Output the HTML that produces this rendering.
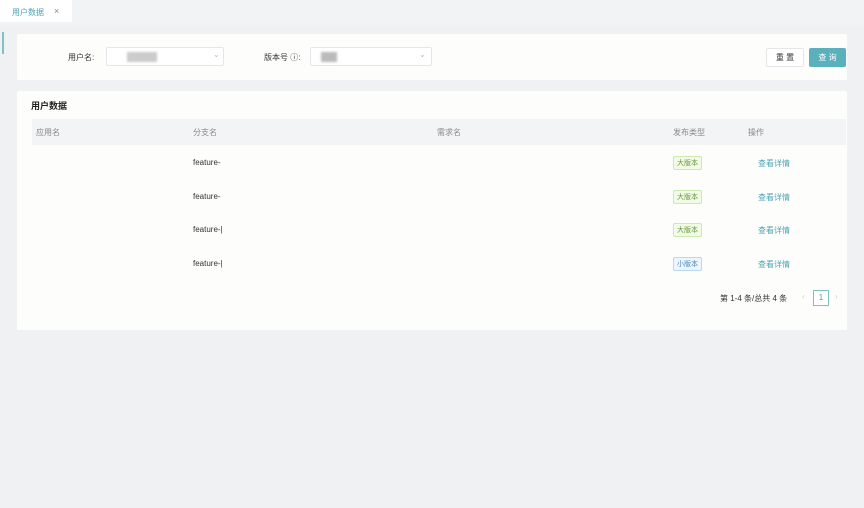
<!DOCTYPE html>
<html><head><meta charset="utf-8"><style>
*{margin:0;padding:0;box-sizing:border-box}
body{width:864px;height:508px;background:#eff1f3;font-family:"Liberation Sans","Noto Sans CJK SC",sans-serif;font-size:8px;color:#333;position:relative;overflow:hidden}
.a{position:absolute}
.card{position:absolute;background:#fdfdfc;border-radius:2px}
.sel{position:absolute;height:19px;border:1px solid #e4e6e8;background:#fff;border-radius:2px}
.tag{position:absolute;font-size:7px;padding:1px 3px;border:1px solid #cde8b0;background:#f2fae8;color:#6a9a3a;border-radius:2px}
.lnk{position:absolute;color:#4aa3b0;font-size:8px}
.ft{position:absolute;left:193px;font-size:8px;color:#333}
.hd{position:absolute;top:127px;color:#888;font-size:8px}
</style></head><body>
<div class="a" style="left:0;top:0;width:864px;height:26px;background:#f2f3f5"></div>
<div class="a" style="left:0;top:0;width:72px;height:22px;background:#fff"></div>
<div class="a" style="left:12px;top:7px;color:#4aa3b0;font-size:8px">用户数据</div>
<div class="a" style="left:54px;top:6px;color:#888;font-size:9px">×</div>
<div class="a" style="left:2px;top:32px;width:2px;height:22px;background:#7fc0c9"></div>
<div class="card" style="left:17px;top:34px;width:830px;height:46px"></div>
<div class="a" style="left:68px;top:52px">用户名:</div>
<div class="sel" style="left:106px;top:47px;width:118px"><div class="a" style="left:20px;top:4px;width:30px;height:10px;background:#ccc;filter:blur(1px)"></div><div class="a" style="left:106px;top:2px;color:#bbb;font-size:8px">⌄</div></div>
<div class="a" style="left:264px;top:52px">版本号 ⓘ:</div>
<div class="sel" style="left:310px;top:47px;width:122px"><div class="a" style="left:10px;top:4px;width:16px;height:10px;background:#bbb;filter:blur(1px)"></div><div class="a" style="left:108px;top:2px;color:#bbb;font-size:8px">⌄</div></div>
<div class="a" style="left:766px;top:48px;width:38px;height:19px;border:1px solid #e4e6e8;background:#fff;border-radius:2px;text-align:center;line-height:17px;font-size:8px">重 置</div>
<div class="a" style="left:809px;top:48px;width:37px;height:19px;background:#5bb1bb;border-radius:2px;text-align:center;line-height:19px;font-size:8px;color:#fff">查 询</div>
<div class="card" style="left:17px;top:91px;width:830px;height:239px"></div>
<div class="a" style="left:31px;top:99px;font-size:9px;font-weight:bold;color:#222">用户数据</div>
<div class="a" style="left:32px;top:119px;width:814px;height:26px;background:#f3f4f5"></div>
<div class="hd" style="left:36px">应用名</div>
<div class="hd" style="left:193px">分支名</div>
<div class="hd" style="left:437px">需求名</div>
<div class="hd" style="left:673px">发布类型</div>
<div class="hd" style="left:748px">操作</div>
<div class="ft" style="top:158px">feature-</div>
<div class="ft" style="top:192px">feature-</div>
<div class="ft" style="top:225px">feature-|</div>
<div class="ft" style="top:259px">feature-|</div>
<div class="tag" style="left:673px;top:156px">大版本</div>
<div class="tag" style="left:673px;top:190px">大版本</div>
<div class="tag" style="left:673px;top:223px">大版本</div>
<div class="tag" style="left:673px;top:257px;border-color:#b8d8f0;background:#eef6fd;color:#4a8ac0">小版本</div>
<div class="lnk" style="left:758px;top:158px">查看详情</div>
<div class="lnk" style="left:758px;top:192px">查看详情</div>
<div class="lnk" style="left:758px;top:225px">查看详情</div>
<div class="lnk" style="left:758px;top:259px">查看详情</div>
<div class="a" style="left:720px;top:293px;font-size:8px">第 1-4 条/总共 4 条</div>
<div class="a" style="left:802px;top:292px;color:#ccc;font-size:8px">‹</div>
<div class="a" style="left:813px;top:290px;width:16px;height:16px;border:1px solid #7fc0c9;text-align:center;line-height:14px;font-size:8px;color:#4aa3b0;background:#fff">1</div>
<div class="a" style="left:835px;top:292px;color:#ccc;font-size:8px">›</div>
</body></html>
